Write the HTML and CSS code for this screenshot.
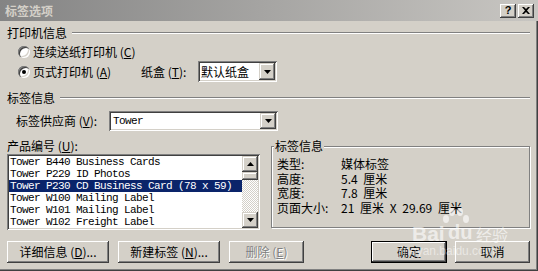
FILE: index.html
```html
<!DOCTYPE html>
<html lang="zh-CN">
<head>
<meta charset="utf-8">
<title>标签选项</title>
<link rel="stylesheet" href="styles.css">
</head>
<body>
<div class="window">
  <div class="titlebar">
    <span class="title">标签选项</span>
    <div class="caption-btns">
      <span class="cap-btn help">?</span>
      <span class="cap-btn close"><svg width="8" height="7" viewBox="0 0 8 7"><path d="M0 0h2l2 2 2-2h2L5 3.5 8 7H6L4 5 2 7H0l3-3.5z" fill="#000"/></svg></span>
    </div>
  </div>
  <div class="content">
    <div class="group-head"><span>打印机信息</span><i class="etch"></i></div>
    <div class="radio-row first">
      <span class="radio"></span><span>连续送纸打印机 (<u>C</u>)</span>
    </div>
    <div class="radio-row second">
      <span class="radio checked"></span><span class="printer-label">页式打印机 (<u>A</u>)</span>
      <span class="tray-label">纸盒 (<u>T</u>):</span>
      <div class="combo tray">
        <span class="combo-text">默认纸盒</span>
        <span class="drop-btn"><svg width="7" height="4" viewBox="0 0 7 4"><path d="M0 0h7L3.5 4z" fill="#000"/></svg></span>
      </div>
    </div>
    <div class="group-head second-head"><span>标签信息</span><i class="etch"></i></div>
    <div class="vendor-row">
      <span class="vendor-label">标签供应商 (<u>V</u>):</span>
      <div class="combo vendor">
        <span class="combo-text mono">Tower</span>
        <span class="drop-btn"><svg width="7" height="4" viewBox="0 0 7 4"><path d="M0 0h7L3.5 4z" fill="#000"/></svg></span>
      </div>
    </div>
    <div class="lower">
      <div class="product-col">
        <div class="product-label">产品编号 (<u>U</u>):</div>
        <div class="listbox">
          <ul class="items">
            <li>Tower B440 Business Cards</li>
            <li>Tower P229 ID Photos</li>
            <li class="selected">Tower P230 CD Business Card (78 x 59)</li>
            <li>Tower W100 Mailing Label</li>
            <li>Tower W101 Mailing Label</li>
            <li>Tower W102 Freight Label</li>
          </ul>
          <div class="vscroll">
            <span class="sb-btn"><svg width="7" height="4" viewBox="0 0 7 4"><path d="M3.5 0L7 4H0z" fill="#000"/></svg></span>
            <span class="sb-thumb"></span>
            <span class="sb-track"></span>
            <span class="sb-btn"><svg width="7" height="4" viewBox="0 0 7 4"><path d="M0 0h7L3.5 4z" fill="#000"/></svg></span>
          </div>
        </div>
      </div>
      <div class="infobox">
        <span class="legend">标签信息</span>
        <div class="info-grid">
          <span>类型:</span><span>媒体标签</span>
          <span>高度:</span><span>5.4 厘米</span>
          <span>宽度:</span><span>7.8 厘米</span>
          <span>页面大小:</span><span>21 厘米 X 29.69 厘米</span>
        </div>
      </div>
    </div>
    <div class="buttons">
      <span class="btn wide">详细信息 (<u>D</u>)...</span>
      <span class="btn wide">新建标签 (<u>N</u>)...</span>
      <span class="btn narrow disabled">删除 (<u>E</u>)</span>
      <span class="btn narrow default">确定</span>
      <span class="btn narrow cancel">取消</span>
    </div>
  </div>
  <div class="watermark">
    <span class="wm-bai">Bai</span>
    <span class="wm-paw"><svg width="28" height="16" viewBox="0 0 28 16"><ellipse cx="4" cy="11" rx="3" ry="4" fill="currentColor"/><ellipse cx="10" cy="4" rx="3" ry="4" fill="currentColor"/><ellipse cx="18" cy="4" rx="3" ry="4" fill="currentColor"/><ellipse cx="24" cy="11" rx="3" ry="4" fill="currentColor"/></svg></span>
    <span class="wm-du">du</span>
    <span class="wm-jy">经验</span>
    <span class="wm-url">jingyan.baidu.com</span>
  </div>
</div>
</body>
</html>
```
FILE: styles.css
```css
html, body {
  margin: 0;
  padding: 0;
}
body {
  width: 538px;
  height: 271px;
  overflow: hidden;
  background: #d4d0c8;
  font-family: "Noto Sans CJK SC", "Noto Sans", sans-serif;
  font-size: 12px;
  line-height: 14px;
  color: #000;
}
u { text-decoration: underline; text-underline-offset: 1px; }

.window {
  position: relative;
  width: 538px;
  height: 271px;
  box-sizing: border-box;
  box-shadow: inset -1px -1px 0 #404040, inset -2px -2px 0 #808080;
  display: flex;
  flex-direction: column;
}

.titlebar {
  height: 21px;
  flex-shrink: 0;
  display: flex;
  align-items: center;
  padding: 0 4px 0 5px;
  background: linear-gradient(to right, #848484, #c8c6c2);
}
.title {
  color: #d4d0c8;
  font-weight: bold;
  font-size: 12px;
}
.caption-btns {
  margin-left: auto;
  display: flex;
  gap: 2px;
}
.cap-btn {
  width: 16px;
  height: 14px;
  box-sizing: border-box;
  display: flex;
  align-items: center;
  justify-content: center;
  background: #d4d0c8;
  box-shadow: inset -1px -1px 0 #404040, inset 1px 1px 0 #fff, inset -2px -2px 0 #808080;
}
.cap-btn.help {
  font-family: "Liberation Sans", sans-serif;
  font-weight: bold;
  font-size: 11px;
  line-height: 12px;
  padding-bottom: 1px;
}

.content {
  flex: 1;
  display: flex;
  flex-direction: column;
  padding: 5px 8px 0 7px;
}

.group-head {
  display: flex;
  align-items: center;
  height: 14px;
}
.etch {
  flex: 1;
  height: 0;
  border-top: 1px solid #808080;
  border-bottom: 1px solid #fff;
  margin-left: 5px;
}
.second-head { margin-top: 9px; }

.radio-row {
  display: flex;
  align-items: center;
}
.radio-row.first { height: 18px; margin-top: 3px; }
.radio-row.second { height: 21px; }
.radio {
  position: relative;
  width: 12px;
  height: 12px;
  flex-shrink: 0;
  margin: 0 3px 0 11px;
  border-radius: 50%;
  background: #fff;
  box-shadow: inset 1px 1px 0 #808080, inset 2px 2px 0 #404040, inset -1px -1px 0 #fff, inset -2px -2px 0 #d4d0c8;
}
.radio.checked::after {
  content: "";
  position: absolute;
  left: 4px;
  top: 4px;
  width: 4px;
  height: 4px;
  border-radius: 50%;
  background: #000;
}
.printer-label { width: 108px; flex-shrink: 0; }
.tray-label { width: 57px; flex-shrink: 0; }

.combo {
  display: flex;
  align-items: stretch;
  box-sizing: border-box;
  padding: 2px;
  background: #fff;
  box-shadow: inset 1px 1px 0 #808080, inset -1px -1px 0 #fff, inset 2px 2px 0 #404040, inset -2px -2px 0 #d4d0c8;
}
.combo.tray { width: 79px; height: 21px; }
.combo.vendor { width: 169px; height: 20px; }
.combo-text {
  flex: 1;
  display: flex;
  align-items: center;
  padding-left: 1px;
}
.combo-text.mono { padding-left: 2px; }
.mono, .items {
  font-family: "Liberation Mono", "DejaVu Sans Mono", monospace;
  font-size: 11px;
  letter-spacing: -0.6px;
}
.drop-btn, .sb-btn {
  width: 16px;
  box-sizing: border-box;
  display: flex;
  align-items: center;
  justify-content: center;
  background: #d4d0c8;
  box-shadow: inset -1px -1px 0 #404040, inset 1px 1px 0 #d4d0c8, inset -2px -2px 0 #808080, inset 2px 2px 0 #fff;
}

.vendor-row {
  display: flex;
  align-items: center;
  margin-top: 6px;
  padding-left: 9px;
}
.vendor-label { width: 93px; flex-shrink: 0; }

.lower {
  display: flex;
  gap: 11px;
  margin-top: 8px;
}
.product-col {
  width: 253px;
  display: flex;
  flex-direction: column;
}
.product-label { height: 14px; }
.listbox {
  margin-top: 1px;
  height: 76px;
  box-sizing: border-box;
  padding: 2px;
  display: flex;
  background: #fff;
  box-shadow: inset 1px 1px 0 #808080, inset -1px -1px 0 #fff, inset 2px 2px 0 #404040, inset -2px -2px 0 #d4d0c8;
}
.items {
  flex: 1;
  list-style: none;
  margin: 0;
  padding: 0;
}
.items li {
  height: 12px;
  line-height: 12px;
  padding-left: 1px;
  white-space: pre;
}
.items li.selected {
  background: #0a246a;
  color: #fff;
}
.vscroll {
  width: 16px;
  display: flex;
  flex-direction: column;
}
.sb-btn { height: 16px; flex-shrink: 0; }
.sb-thumb {
  height: 8px;
  flex-shrink: 0;
  background: #d4d0c8;
  box-shadow: inset -1px -1px 0 #404040, inset 1px 1px 0 #d4d0c8, inset -2px -2px 0 #808080, inset 2px 2px 0 #fff;
}
.sb-track {
  flex: 1;
  background: repeating-conic-gradient(#fff 0 25%, #d4d0c8 0 50%) 0 0 / 2px 2px;
}

.infobox {
  flex: 1;
  margin-top: 7px;
  height: 82px;
  box-sizing: border-box;
  border: 1px solid #808080;
  box-shadow: inset 1px 1px 0 #fff, 1px 1px 0 #fff;
  display: flex;
  flex-direction: column;
}
.legend {
  align-self: flex-start;
  margin: -8px 0 0 2px;
  padding: 0 1px;
  height: 14px;
  background: #d4d0c8;
}
.info-grid {
  display: grid;
  grid-template-columns: 64px auto;
  margin: 4px 0 0 5px;
  line-height: 14.5px;
  word-spacing: 3px;
}

.buttons {
  display: flex;
  gap: 9px;
  margin-top: 11px;
}
.btn {
  height: 22px;
  box-sizing: border-box;
  display: flex;
  align-items: center;
  justify-content: center;
  background: #d4d0c8;
  box-shadow: inset -1px -1px 0 #404040, inset 1px 1px 0 #fff, inset -2px -2px 0 #808080;
}
.btn.wide { width: 102px; }
.btn.narrow { width: 75px; }
.btn.disabled {
  color: #808080;
  text-shadow: 1px 1px 0 #fff;
}
.btn.default {
  width: 76px;
  margin-left: auto;
  box-shadow: inset 0 0 0 1px #000, inset -2px -2px 0 #404040, inset 2px 2px 0 #fff, inset -3px -3px 0 #808080;
}
.btn.cancel { margin-left: -1px; }

.watermark {
  position: absolute;
  left: 0;
  top: 0;
  width: 538px;
  height: 271px;
  pointer-events: none;
  color: rgba(255, 255, 255, 0.62);
}
.wm-bai, .wm-du, .wm-jy, .wm-url, .wm-paw {
  position: absolute;
}
.wm-bai {
  left: 412px;
  top: 224px;
  font-family: "Liberation Sans", sans-serif;
  font-weight: bold;
  font-size: 21px;
  line-height: 20px;
}
.wm-paw {
  left: 442px;
  top: 208px;
  display: flex;
}
.wm-du {
  left: 448px;
  top: 222px;
  font-family: "Liberation Sans", sans-serif;
  font-weight: bold;
  font-size: 20px;
  line-height: 20px;
}
.wm-jy {
  left: 476px;
  top: 226px;
  font-size: 16px;
  line-height: 16px;
}
.wm-url {
  left: 398px;
  top: 244px;
  font-family: "Liberation Sans", sans-serif;
  font-size: 12px;
  line-height: 14px;
  color: rgba(255, 255, 255, 0.5);
}
```
